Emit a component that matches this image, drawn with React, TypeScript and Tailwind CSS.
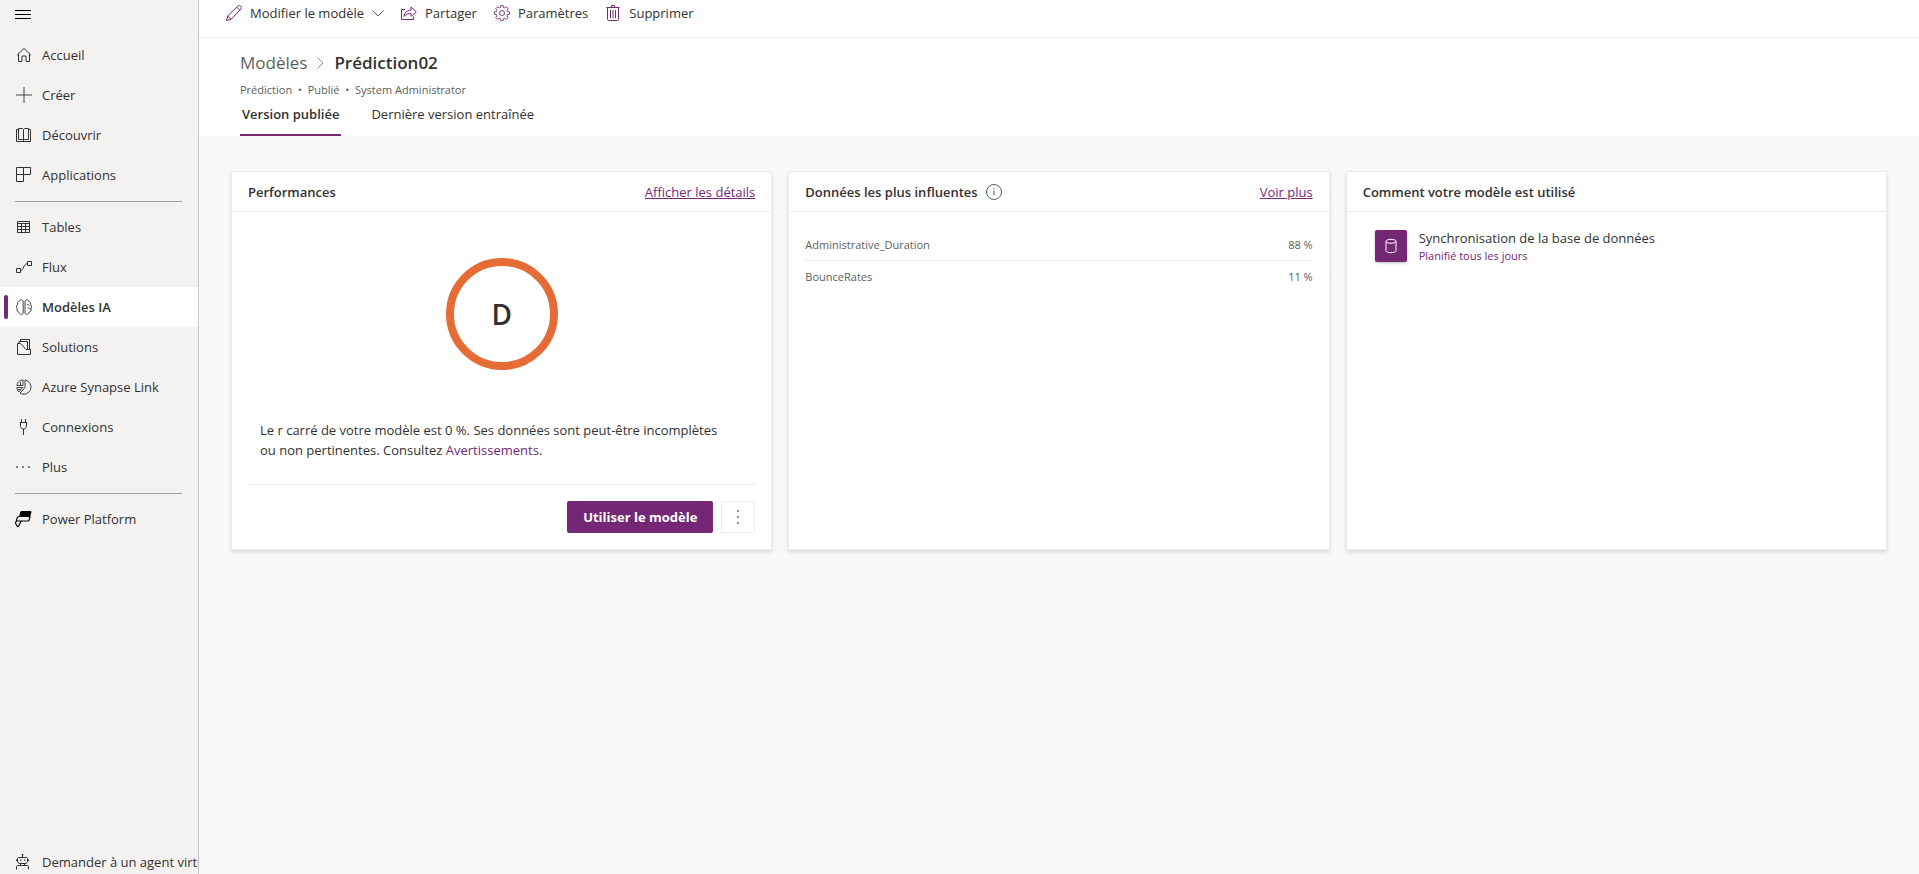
import React, {useState} from 'react'


const Icon = ({children, className = '', size = 16}: {children: React.ReactNode, className?: string, size?: number}) => (
    <svg width={size} height={size} viewBox="0 0 16 16" fill="none" stroke="currentColor" strokeWidth="1" className={`shrink-0 overflow-visible ${className}`} aria-hidden="true">
        {children}
    </svg>
)

const icons: Record<string, React.ReactNode> = {
    home: <path d="M1.200 8.200 8 1.500l6.800 6.700M2.500 7.200v7.300h3.500v-5.500h4v5.500h3.500V7.200" />,
    plus: <path d="M0 8h16M8 0v16" strokeWidth="0.9" />,
    book: <path d="M2.500 2.500h-2v12h14v-12h-2M7.500 2.500v12M7.500 2.500l-1-1h-4v11h4l1 1 1-1h4v-11h-4z" />,
    apps: <path d="M.5.5h14v7H.5zM7.500.5v14h-7v-7" />,
    table: <path d="M1.500 2.500h12v11h-12zM1.500 4.500h12M1.500 7.500h12M1.500 10.500h12M5.500 4.500v9M9.500 4.500v9" />,
    flow: <path d="M.5 9.500h4v4h-4zM11.500 2.500h4v4h-4zM4.500 11.500c3.500 0 3-7 7-7" />,
    brain: (
        <g strokeWidth="0.9">
            <path d="M7.200 2.300C6.800.5 4.300.1 3.600 2.100 1.900 2.200 1.300 3.900 1.800 5.200.2 6 .1 8.500 1.100 9.700c-.6 1.700.3 3.300 1.700 3.500.6 2.400 3.700 3.100 4.400 1z" />
            <path d="M9 2.300c.5-1.800 2.800-2.200 3.600-.2 1.700.1 2.300 1.800 1.800 3.100 1.500.8 1.600 3.300.6 4.500.6 1.700-.3 3.300-1.800 3.500-.6 2.400-3.500 3.100-4.200 1z" />
            <path d="M11 5.300c1.300 0 2 .6 2.300 1.500M14.800 9.700c-1.500.2-2.500-.3-2.800-1.500" />
        </g>
    ),
    solutions: <path d="M1.500 15.500v-11h3l5.500 6h4.500v5zM3 4.500v-2h8.500v8M4.500 2.500v-2h9v10" />,
    synapse: (
        <g strokeWidth="0.9">
            <path d="M9 .9a7.200 7.200 0 1 1-5 13.200l5-5.600z" />
            <path d="M7 .9v5.600H.8A6.800 6.800 0 0 1 7 .9zM4.500 3v3.500M.8 8.500h6l-4 4.500A7 7 0 0 1 .8 8.500zM1.700 10.500h3" />
        </g>
    ),
    plug: <path d="M5.500 0v3.500M9.500 0v3.500M3.800 3.500h7.400M4.500 3.500v4c0 1.200 1.300 2.500 3 2.500s3-1.300 3-2.500v-4M7.500 10v6" />,
    more: <path d="M.2 7.200h1.600v1.600H.2zM6.200 7.200h1.600v1.600H6.200zM12.200 7.200h1.600v1.600h-1.600z" fill="currentColor" stroke="none" />,
    power: (
        <g className="text-black">
            <path d="M5.500 0h8.700c1 0 1.400.6 1.200 1.500l-.8 2.600c-.2.500-.7.900-1.300.9H4.200c-.6 0-1-.5-.8-1.100L4.200 1C4.400.4 4.900 0 5.500 0z" fill="currentColor" stroke="none" />
            <path d="M14.300 4.500 13.100 9c-.2.600-.6 1-1.200 1H1.400c-.8 0-1.100-.5-.9-1.200l.8-2.100c.3-.8.800-1.200 1.600-1.200h10.600M.2 10.200l-.6 1.600c-.1.300-.1.600.1.900l1.600 2.600c.3.500.9.500 1.200 0L5.400 10" strokeWidth="1.200" />
        </g>
    ),
    bot: (
        <>
            <path d="M6.500.5v3M2.500 3.500h8c.6 0 1 .4 1 1v2.500c0 1.300-1 2.500-2.500 2.500H4C2.500 9.500 1.500 8.300 1.500 7V4.500c0-.6.4-1 1-1zM.5 15.500v-3c0-.6.4-1 1-1h10c.6 0 1 .4 1 1v3M4.500 9.500v2M8.500 9.500v2" />
            <path d="M4 5.500h1.300v1.300H4zM8 5.500h1.300v1.300H8zM5.800 0h1.500v1.500H5.800zM0 5.500h1.500v1.500H0zM11.500 5.500H13v1.500h-1.500z" fill="currentColor" stroke="none" />
        </>
    ),
    pencil: <path d="M.5 15.500l1.200-4.600L12 .9c1.800-1.400 4.400 1.200 3 3L5.100 14.300zM1.700 10.900l3.400 3.400M10.700 2.200l3.100 3.100" />,
    share: <path d="M4 4.500H.5v10h12v-3M3 11.500c.3-4 2.700-6 7-6.300V2l5.300 4.700L10 11.300V8.500c-3.200 0-5.200.7-7 3z" />,
    gear: (
        <g strokeWidth="0.9">
            <circle cx="8" cy="8" r="2.500" />
            <path d="M6.900.5h2.200l.4 2 1.100.4 1.700-1.200 1.900 1.900-1.200 1.700.5 1.200 2 .4v2.300l-2 .4-.5 1.200 1.200 1.700-1.900 1.900-1.700-1.200-1.100.5-.4 2H6.900l-.4-2-1.200-.5-1.700 1.200-1.800-1.900 1.100-1.700-.5-1.200-2-.4V6.900l2-.4.500-1.200L1.800 3.600l1.800-1.900 1.800 1.200 1.100-.4z" />
        </g>
    ),
    trash: <path d="M1.500 2.500h13M6.500 2.500v-2h3v2M2.500 2.500v12c0 .6.400 1 1 1h9c.6 0 1-.4 1-1v-12M5.500 5v8M8 5v8M10.500 5v8" />,
}

const nav_groups = [
    [
        {label: 'Accueil', icon: 'home'},
        {label: 'Créer', icon: 'plus'},
        {label: 'Découvrir', icon: 'book'},
        {label: 'Applications', icon: 'apps'},
    ],
    [
        {label: 'Tables', icon: 'table'},
        {label: 'Flux', icon: 'flow'},
        {label: 'Modèles IA', icon: 'brain'},
        {label: 'Solutions', icon: 'solutions'},
        {label: 'Azure Synapse Link', icon: 'synapse'},
        {label: 'Connexions', icon: 'plug'},
        {label: 'Plus', icon: 'more'},
    ],
    [
        {label: 'Power Platform', icon: 'power'},
    ],
]

const influences = [
    {name: 'Administrative_Duration', value: '88 %'},
    {name: 'BounceRates', value: '11 %'},
]


const Sidebar = () => {
    const [active, setActive] = useState('Modèles IA')

    return (
        <nav className="w-[199px] shrink-0 h-screen flex flex-col overflow-hidden bg-[#f3f2f1] border-r border-[#c8c6c4]">
            <button aria-label="Menu" className="h-[35px] shrink-0 pl-[15px] pb-1.5 flex items-center text-black">
                <svg width="16" height="9" viewBox="0 0 16 9" stroke="currentColor" aria-hidden="true">
                    <path d="M0 .5h16M0 4.500h16M0 8.500h16" />
                </svg>
            </button>

            {nav_groups.map((group, ind) => (
                <div key={ind} className="shrink-0">
                    {ind > 0 && <div className="h-3 pl-[15px] pr-4 pt-1.5"><hr className="border-[#a19f9d]" /></div>}
                    {group.map(item => (
                        <a key={item.label} href="#" onClick={(e) => { e.preventDefault(); setActive(item.label) }}
                            className={`relative h-10 pl-4 flex items-center gap-2.5 whitespace-nowrap ${active === item.label ? 'bg-white font-semibold' : ''}`}>
                            {active === item.label && <span className="absolute left-1 top-2 w-1 h-6 rounded-[2px] bg-[#742774]" />}
                            <Icon>{icons[item.icon]}</Icon>
                            {item.label}
                        </a>
                    ))}
                </div>
            ))}

            <a href="#" className="mt-auto h-8 shrink-0 pt-2 pl-4 flex items-center gap-2.5 whitespace-nowrap">
                <Icon>{icons.bot}</Icon>
                Demander à un agent virtuel
            </a>
        </nav>
    )
}

const Card = ({title, info, link, children}: {title: string, info?: boolean, link?: string, children: React.ReactNode}) => (
    <section className="flex flex-col min-h-[379px] bg-white border border-[#edebe9] shadow-[0_2px_4px_rgba(0,0,0,0.14)]">
        <header className="h-10 shrink-0 px-4 flex items-center border-b border-[#edebe9]">
            <h2 className="font-semibold">{title}</h2>
            {info && (
                <button aria-label="Informations" className="ml-2 text-[#605e5c]">
                    <Icon>
                        <circle cx="8" cy="8" r="7.500" />
                        <path d="M8 6.500v5M8 4v1.200" />
                    </Icon>
                </button>
            )}
            {link && <a href="#" className="ml-auto text-[#742774] underline">{link}</a>}
        </header>
        {children}
    </section>
)

const CommandBar = () => (
    <div className="h-[38px] shrink-0 pl-[27px] pb-[11px] flex items-center gap-[17px] bg-white border-b border-[#edebe9]">
        <button className="flex items-center gap-2">
            <Icon className="text-[#742774]">{icons.pencil}</Icon>
            Modifier le modèle
            <svg width="12" height="7" viewBox="0 0 12 7" fill="none" stroke="#605e5c" aria-hidden="true"><path d="M.5.5 6 6 11.500.5" /></svg>
        </button>
        <button className="flex items-center gap-2">
            <Icon className="text-[#742774]">{icons.share}</Icon>
            Partager
        </button>
        <button className="flex items-center gap-2">
            <Icon className="text-[#742774]">{icons.gear}</Icon>
            Paramètres
        </button>
        <button className="flex items-center gap-2">
            <Icon className="text-[#742774]">{icons.trash}</Icon>
            Supprimer
        </button>
    </div>
)

const App = () => {
    const [tab, setTab] = useState(0)

    return (
        <div className="flex h-screen overflow-hidden font-['Open_Sans','Noto_Sans',sans-serif] text-[13px] leading-5 text-[#323130] bg-[#faf9f8]">
            <Sidebar />

            <main className="flex-1 min-w-0 flex flex-col">
                <CommandBar />

                <div className="pl-[41px] pt-[13px] bg-white">
                    <div className="flex items-center gap-2.5 text-[17px] leading-6">
                        <a href="#" className="text-[#605e5c]">Modèles</a>
                        <svg width="7" height="12" viewBox="0 0 7 12" fill="none" stroke="#8a8886" aria-hidden="true"><path d="M.5.5 6 6 .5 11.500" /></svg>
                        <h1 className="font-semibold">Prédiction02</h1>
                    </div>
                    <p className="mt-[7px] text-[11px] leading-4 text-[#605e5c]">Prédiction&nbsp; •&nbsp; Publié&nbsp; •&nbsp; System Administrator</p>
                    <div role="tablist" className="flex gap-7">
                        {['Version publiée', 'Dernière version entraînée'].map((label, ind) => (
                            <button key={label} role="tab" aria-selected={tab === ind} onClick={() => setTab(ind)}
                                className={`h-[38px] px-0.5 pb-2 pt-1 border-b-2 ${tab === ind ? 'font-semibold border-[#742774]' : 'border-transparent'}`}>
                                {label}
                            </button>
                        ))}
                    </div>
                </div>

                <div className="px-8 pt-[35px] grid grid-cols-3 gap-4">
                    <Card title="Performances" link="Afficher les détails">
                        <div className="mt-[46px] mx-auto size-28 rounded-full border-8 border-[#e66c37] flex items-center justify-center text-[28px] font-semibold">D</div>
                        <p className="mt-[50px] pl-7 pr-10">
                            Le r carré de votre modèle est 0 %. Ses données sont peut-être incomplètes ou non pertinentes. Consultez <a href="#" className="text-[#742774]">Avertissements</a>.
                        </p>
                        <div className="mt-auto mx-4 py-4 border-t border-[#edebe9] flex justify-end gap-2">
                            <button className="h-8 px-4 rounded-[2px] bg-[#742774] text-white font-bold">Utiliser le modèle</button>
                            <button aria-label="Plus d'options" className="h-8 w-[34px] rounded-[2px] border border-[#edebe9] flex items-center justify-center text-[#742774]">
                                <Icon><path d="M7.200 1.200h1.600v1.600H7.200zM7.200 7.200h1.600v1.600H7.200zM7.200 13.200h1.600v1.600H7.200z" fill="currentColor" stroke="none" /></Icon>
                            </button>
                        </div>
                    </Card>

                    <Card title="Données les plus influentes" info link="Voir plus">
                        <table className="mt-4 mx-4 text-[11px] leading-4 text-[#605e5c]">
                            <tbody>
                                {influences.map(row => (
                                    <tr key={row.name} className="h-8 border-b border-[#edebe9] last:border-0">
                                        <td className="pt-0.5">{row.name}</td>
                                        <td className="pt-0.5 text-right">{row.value}</td>
                                    </tr>
                                ))}
                            </tbody>
                        </table>
                    </Card>

                    <Card title="Comment votre modèle est utilisé">
                        <div className="mt-4 ml-7 flex items-center gap-3">
                            <span className="size-8 rounded-[2px] bg-[#742774] text-white flex items-center justify-center shadow-[0_1px_3px_rgba(0,0,0,0.25)]">
                                <Icon>
                                    <ellipse cx="8" cy="3.300" rx="5" ry="2" />
                                    <path d="M3 3.300v9.400c0 1.100 2.200 2 5 2s5-.9 5-2V3.300" />
                                </Icon>
                            </span>
                            <div>
                                <p>Synchronisation de la base de données</p>
                                <p className="text-[11px] leading-4 text-[#742774]">Planifié tous les jours</p>
                            </div>
                        </div>
                    </Card>
                </div>
            </main>
        </div>
    )
}

export default App
